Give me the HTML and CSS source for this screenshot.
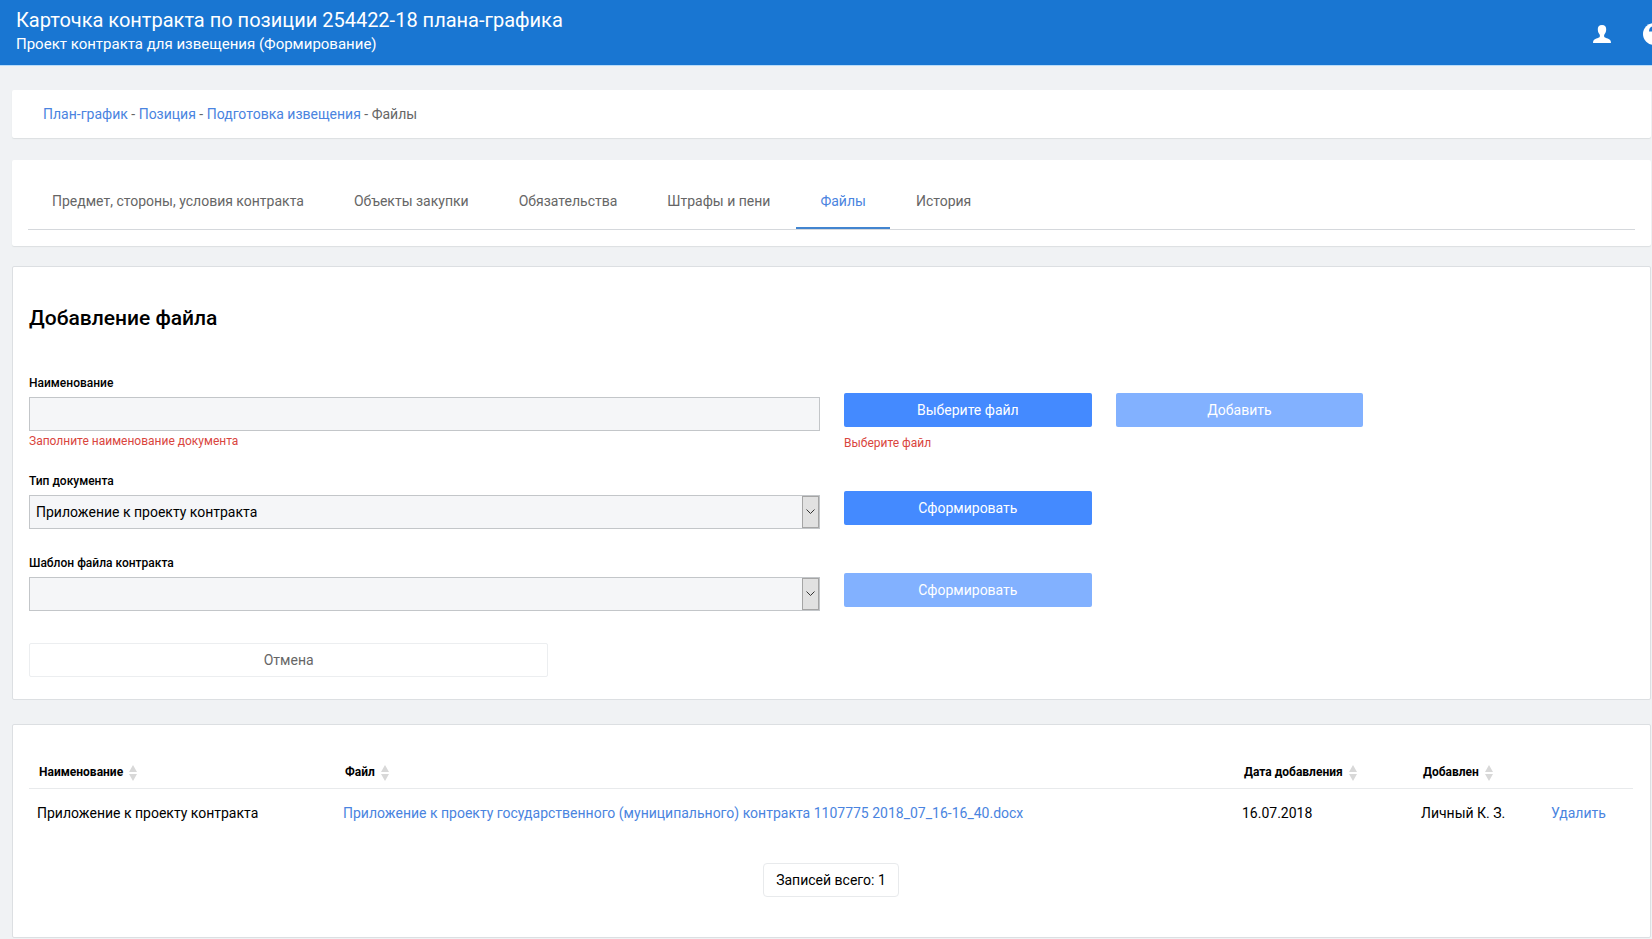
FILE: index.html
```html
<!DOCTYPE html>
<html lang="ru">
<head>
<meta charset="utf-8">
<meta name="viewport" content="width=device-width, initial-scale=1">
<title>Карточка контракта</title>
<link rel="stylesheet" href="styles.css">
</head>
<body>
<svg class="defs" aria-hidden="true">
  <symbol id="sort" viewBox="0 0 8 16"><path d="M4 0 8 7H0zM0 9h8l-4 7z"/></symbol>
</svg>
<header class="header">
  <div class="heading">
    <h1 class="title">Карточка контракта по позиции 254422-18 плана-графика</h1>
    <p class="subtitle">Проект контракта для извещения (Формирование)</p>
  </div>
  <div class="tools">
    <button class="tool" type="button" aria-label="Профиль">
      <svg class="icon-user" viewBox="0 0 18 18"><path d="M9 0C6 0 4.600 1.800 4.800 4.600c.1 1.700.5 3.300 1.500 4.500.7.9.8 2.100.3 2.900-.5.7-1.900 1-3.300 1.500C1.200 14.300 0 15.300 0 18h18c0-2.700-1.200-3.700-3.300-4.500-1.400-.5-2.800-.8-3.300-1.500-.5-.8-.4-2 .3-2.900 1-1.200 1.400-2.800 1.500-4.500C13.400 1.800 12 0 9 0z"/></svg>
    </button>
    <button class="tool" type="button" aria-label="Справка">
      <svg class="icon-help" viewBox="0 0 22 22"><circle cx="11" cy="11" r="11"/><path class="mark" d="M7.500 8.500c0-5 7-5 7-1 0 2.500-3.500 2.500-3.500 5.500M11 15v2.500"/></svg>
    </button>
  </div>
</header>
<main class="page">
  <nav class="card crumbs" aria-label="Навигация">
    <a class="link" href="#">План-график</a> - <a class="link" href="#">Позиция</a> - <a class="link" href="#">Подготовка извещения</a> - Файлы
  </nav>
  <nav class="card tabs-card" aria-label="Разделы">
    <div class="tabs">
      <a class="tab" href="#">Предмет, стороны, условия контракта</a>
      <a class="tab" href="#">Объекты закупки</a>
      <a class="tab" href="#">Обязательства</a>
      <a class="tab" href="#">Штрафы и пени</a>
      <a class="tab active" href="#" aria-current="page">Файлы</a>
      <a class="tab" href="#">История</a>
    </div>
  </nav>
  <form class="card outlined form">
    <h2 class="form-title">Добавление файла</h2>
    <div class="row">
      <div class="field">
        <label class="label" for="name">Наименование</label>
        <input class="control" id="name" type="text">
        <p class="error">Заполните наименование документа</p>
      </div>
      <div class="action">
        <button class="btn primary" type="button">Выберите файл</button>
        <p class="error file-error">Выберите файл</p>
      </div>
      <div class="action"><button class="btn primary" type="button" disabled>Добавить</button></div>
    </div>
    <div class="row">
      <div class="field">
        <label class="label" for="type">Тип документа</label>
        <div class="select">
          <select class="control" id="type"><option>Приложение к проекту контракта</option></select>
          <span class="arrow"><svg class="chevron" viewBox="0 0 9 6"><path d="M.5.5l4 4 4-4"/></svg></span>
        </div>
      </div>
      <div class="action"><button class="btn primary" type="button">Сформировать</button></div>
    </div>
    <div class="row">
      <div class="field">
        <label class="label" for="template">Шаблон файла контракта</label>
        <div class="select">
          <select class="control" id="template"><option></option></select>
          <span class="arrow"><svg class="chevron" viewBox="0 0 9 6"><path d="M.5.5l4 4 4-4"/></svg></span>
        </div>
      </div>
      <div class="action"><button class="btn primary" type="button" disabled>Сформировать</button></div>
    </div>
    <div class="row cancel-row"><button class="btn cancel" type="button">Отмена</button></div>
  </form>
  <section class="card outlined files">
    <table class="table">
      <colgroup><col class="c-name"><col class="c-file"><col class="c-date"><col class="c-user"><col class="c-del"></colgroup>
      <thead>
        <tr>
          <th>Наименование<svg class="sort"><use href="#sort"/></svg></th>
          <th>Файл<svg class="sort"><use href="#sort"/></svg></th>
          <th>Дата добавления<svg class="sort"><use href="#sort"/></svg></th>
          <th>Добавлен<svg class="sort"><use href="#sort"/></svg></th>
          <th></th>
        </tr>
      </thead>
      <tbody>
        <tr>
          <td>Приложение к проекту контракта</td>
          <td><a class="link" href="#">Приложение к проекту государственного (муниципального) контракта 1107775 2018_07_16-16_40.docx</a></td>
          <td>16.07.2018</td>
          <td>Личный К. З.</td>
          <td><a class="link" href="#">Удалить</a></td>
        </tr>
      </tbody>
    </table>
    <p class="total">Записей всего: 1</p>
  </section>
</main>
</body>
</html>
```

FILE: styles.css
```css
* { box-sizing: border-box; }
body {
  margin: 0;
  background: #f0f2f4;
  color: #000;
  font: 14px/20px Roboto, "Noto Sans", sans-serif;
}
h1, h2, p { margin: 0; font-weight: 400; }
button, input, select { font: inherit; color: inherit; }
.defs { display: none; }

.header {
  display: flex;
  justify-content: space-between;
  height: 66px;
  padding-left: 16px;
  overflow: hidden;
  background: #1976d2;
  border-bottom: 1px solid #b8dcfa;
  color: #fff;
}
.heading { padding-top: 8px; }
.title { font-size: 20px; line-height: 24px; }
.subtitle { font-size: 15px; line-height: 24px; }
.tools {
  display: flex;
  align-items: center;
  gap: 32px;
  margin-right: -13px;
  padding-top: 2px;
}
.tool { display: flex; padding: 0; border: 0; background: none; }
.icon-user { width: 18px; height: 18px; fill: #fff; }
.icon-help { width: 22px; height: 22px; fill: #fff; }
.mark { fill: none; stroke: #1976d2; stroke-width: 3; }

.page { padding: 24px 1px 1px 12px; }
.card {
  background: #fff;
  border-radius: 2px;
  box-shadow: 0 1px 1px #dcdfe2;
}
.outlined { border: 1px solid #dcdfe2; box-shadow: none; }
.link { color: #4a84e0; text-decoration: none; }

.crumbs { padding: 14px 31px; color: #666; }
.tabs-card { margin-top: 22px; padding: 14px 16px 16px; }
.tabs { display: flex; gap: 2px; border-bottom: 1px solid #d5d8dc; }
.tab {
  padding: 17px 24px 16px;
  border-bottom: 2px solid transparent;
  color: #666;
  text-decoration: none;
}
.active { color: #4a84e0; border-color: #4285d0; }

.form { margin-top: 20px; padding: 39px 15px 22px 16px; }
.form-title {
  margin-bottom: 41px;
  font-size: 21px;
  font-weight: 500;
  line-height: 24px;
}
.row {
  display: grid;
  grid-template-columns: repeat(12, minmax(0, 1fr));
  column-gap: 24px;
  margin-bottom: 22px;
}
.field { grid-column: span 6; }
.action { grid-column: span 2; padding-top: 22px; }
.label {
  display: block;
  margin-bottom: 6px;
  padding-top: 4px;
  font-size: 12px;
  font-weight: 500;
  line-height: 16px;
}
.control {
  display: block;
  width: 100%;
  height: 34px;
  padding: 0 6px;
  border: 1px solid #c3c6c9;
  border-radius: 0;
  background: #f5f6f8;
  appearance: none;
}
.error { padding-top: 2px; color: #d9453d; font-size: 12px; line-height: 16px; }
.file-error { padding-top: 8px; }
.row:has(.error) { margin-bottom: 18px; }
.select { position: relative; }
.arrow {
  position: absolute;
  inset: 1px 1px 1px auto;
  display: flex;
  align-items: center;
  justify-content: center;
  width: 17px;
  border: 1px solid #a5a5a5;
  background: #e1e1e1;
  pointer-events: none;
}
.chevron { width: 9px; height: 6px; fill: none; stroke: #333; }
.btn { width: 100%; height: 34px; border: 0; border-radius: 2px; }
.primary { background: #448aff; color: #fff; }
.primary:disabled { background: #82b1ff; }
.cancel-row { margin: 32px 0 0; }
.cancel {
  grid-column: span 4;
  border: 1px solid #eceef0;
  background: #fff;
  color: #666;
}

.files { margin-top: 24px; padding: 31px 17px 40px 16px; }
.table { width: 100%; border-collapse: collapse; table-layout: fixed; }
.c-name { width: 306px; }
.c-date { width: 179px; }
.c-user { width: 130px; }
.c-del { width: 90px; }
th {
  padding: 6px 10px;
  border-bottom: 1px solid #e8eaec;
  font-size: 12px;
  font-weight: 700;
  line-height: 20px;
  text-align: left;
}
td { padding: 14px 8px; white-space: nowrap; }
.sort {
  width: 8px;
  height: 16px;
  margin-left: 6px;
  fill: #d8d8d8;
  vertical-align: middle;
}
.total {
  width: max-content;
  margin: 26px auto 0;
  padding: 6px 12px;
  border: 1px solid #e8eaec;
  border-radius: 4px;
}
```
